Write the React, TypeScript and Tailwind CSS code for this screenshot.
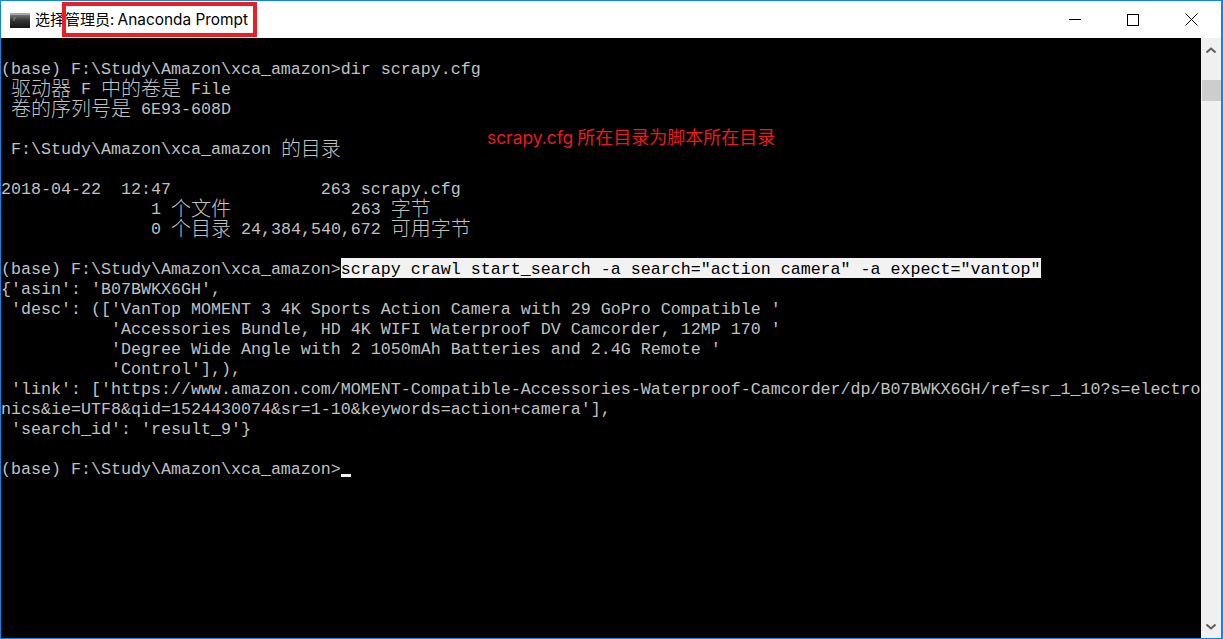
import React from "react";

const P = "(base) F:\\Study\\Amazon\\xca_amazon>";
const lines: React.ReactNode[] = [
  "",
  P + "dir scrapy.cfg",
  " 驱动器 F 中的卷是 File",
  " 卷的序列号是 6E93-608D",
  "",
  " F:\\Study\\Amazon\\xca_amazon 的目录",
  "",
  "2018-04-22  12:47               263 scrapy.cfg",
  "               1 个文件            263 字节",
  "               0 个目录 24,384,540,672 可用字节",
  "",
  "SEL",
  "{'asin': 'B07BWKX6GH',",
  " 'desc': (['VanTop MOMENT 3 4K Sports Action Camera with 29 GoPro Compatible '",
  "           'Accessories Bundle, HD 4K WIFI Waterproof DV Camcorder, 12MP 170 '",
  "           'Degree Wide Angle with 2 1050mAh Batteries and 2.4G Remote '",
  "           'Control'],),",
  " 'link': ['https://www.amazon.com/MOMENT-Compatible-Accessories-Waterproof-Camcorder/dp/B07BWKX6GH/ref=sr_1_10?s=electro",
  "nics&ie=UTF8&qid=1524430074&sr=1-10&keywords=action+camera'],",
  " 'search_id': 'result_9'}",
  "",
  "CUR",
];

function Cells({ text }: { text: string }) {
  const parts = text.split(/([\u4e00-\u9fff]+)/);
  return (
    <>
      {parts.map((p, i) =>
        /[\u4e00-\u9fff]/.test(p) ? (
          <span key={i} className="h-5 font-['Noto_Sans_CJK_SC',sans-serif] font-light text-[20px] leading-5">
            {p}
          </span>
        ) : (
          <span key={i} className="h-5 pt-[2px] leading-5">
            {p}
          </span>
        )
      )}
    </>
  );
}

function Line({ value }: { value: React.ReactNode }) {
  if (value === "SEL") {
    return (
      <div className="h-5 leading-5 flex">
        <span className="h-5 pt-[2px] leading-5">{P}</span>
        <span className="bg-[#f2f2f2] text-black h-5 pt-[2px] leading-5">
          scrapy crawl start_search -a search="action camera" -a expect="vantop"
        </span>
      </div>
    );
  }
  if (value === "CUR") {
    return (
      <div className="h-5 leading-5 flex">
        <span className="h-5 pt-[2px] leading-5">{P}</span>
        <span className="w-2.5 h-5 flex flex-col justify-end">
          <span className="h-[3px] bg-[#f2f2f2] mb-[1px]"></span>
        </span>
      </div>
    );
  }
  return (
    <div className="h-5 flex">
      <Cells text={String(value)} />
    </div>
  );
}

export default function App() {
  return (
    <div className="relative w-[1223px] h-[639px] overflow-hidden bg-white flex flex-col border-t border-b border-l border-r-2 border-[#0f86e0] font-['Liberation_Sans',sans-serif]">
      <div className="h-[37px] shrink-0 flex items-center bg-white">
        <svg width="20" height="15" viewBox="0 0 20 15" className="ml-[9px] mt-[1px] shrink-0">
          <defs>
            <linearGradient id="g" x1="0" y1="0" x2="0" y2="1">
              <stop offset="0" stopColor="#8a8a8a" />
              <stop offset="0.5" stopColor="#333" />
              <stop offset="1" stopColor="#151515" />
            </linearGradient>
          </defs>
          <rect x="0" y="0" width="20" height="15" fill="url(#g)" />
          <rect x="0" y="0" width="20" height="2" fill="#a8a8a8" />
          <path d="M3 5h3M3 7h2" stroke="#888" strokeWidth="1" />
        </svg>
        <span className="ml-[5px] text-[15px] text-black whitespace-pre font-['Noto_Sans_CJK_SC','Liberation_Sans',sans-serif]">
          选择管理员: <span className="font-['Inter',sans-serif] text-[15.4px]">Anaconda Prompt</span>
        </span>
        <div className="ml-auto flex items-center h-full mr-[1px]">
          <div className="w-[58px] flex justify-center">
            <span className="w-3 h-px bg-black"></span>
          </div>
          <div className="w-[58px] flex justify-center">
            <span className="w-3 h-3 border border-black"></span>
          </div>
          <div className="w-[58px] flex justify-center">
            <svg width="13" height="13" viewBox="0 0 13 13">
              <path d="M0.5 0.5L12.5 12.5M12.5 0.5L0.5 12.5" stroke="#000" strokeWidth="1" />
            </svg>
          </div>
        </div>
      </div>
      <div className="flex-1 flex min-h-0">
        <div className="w-[1200px] bg-black text-[#c0c0c0] font-['Liberation_Mono',monospace] text-[16.67px] whitespace-pre overflow-hidden">
          {lines.map((l, i) => (
            <Line key={i} value={l} />
          ))}
        </div>
        <div className="flex-1 bg-[#f0f0f0] flex flex-col items-center relative">
          <svg width="10" height="6" viewBox="0 0 10 6" className="mt-[9px]">
            <path d="M0.5 5.5L5 1.5L9.5 5.5" fill="none" stroke="#606060" strokeWidth="2" />
          </svg>
          <div className="mt-[27px] h-[21px] w-[19px] bg-[#cdcdcd]"></div>
          <svg width="10" height="6" viewBox="0 0 10 6" className="mt-auto mb-[8px]">
            <path d="M0.5 0.5L5 4.5L9.5 0.5" fill="none" stroke="#606060" strokeWidth="2" />
          </svg>
        </div>
      </div>
      <div className="absolute left-[61px] top-[1px] w-[195px] h-[35px] border-4 border-[#ee1c25]"></div>
      <div className="absolute left-[486px] top-[124px] text-[18px] leading-[22px] text-[#e81c1c] whitespace-pre font-['Noto_Sans_CJK_SC',sans-serif]">
        <span className="font-['Inter',sans-serif] text-[17.4px]">scrapy.cfg</span> 所在目录为脚本所在目录
      </div>
    </div>
  );
}
